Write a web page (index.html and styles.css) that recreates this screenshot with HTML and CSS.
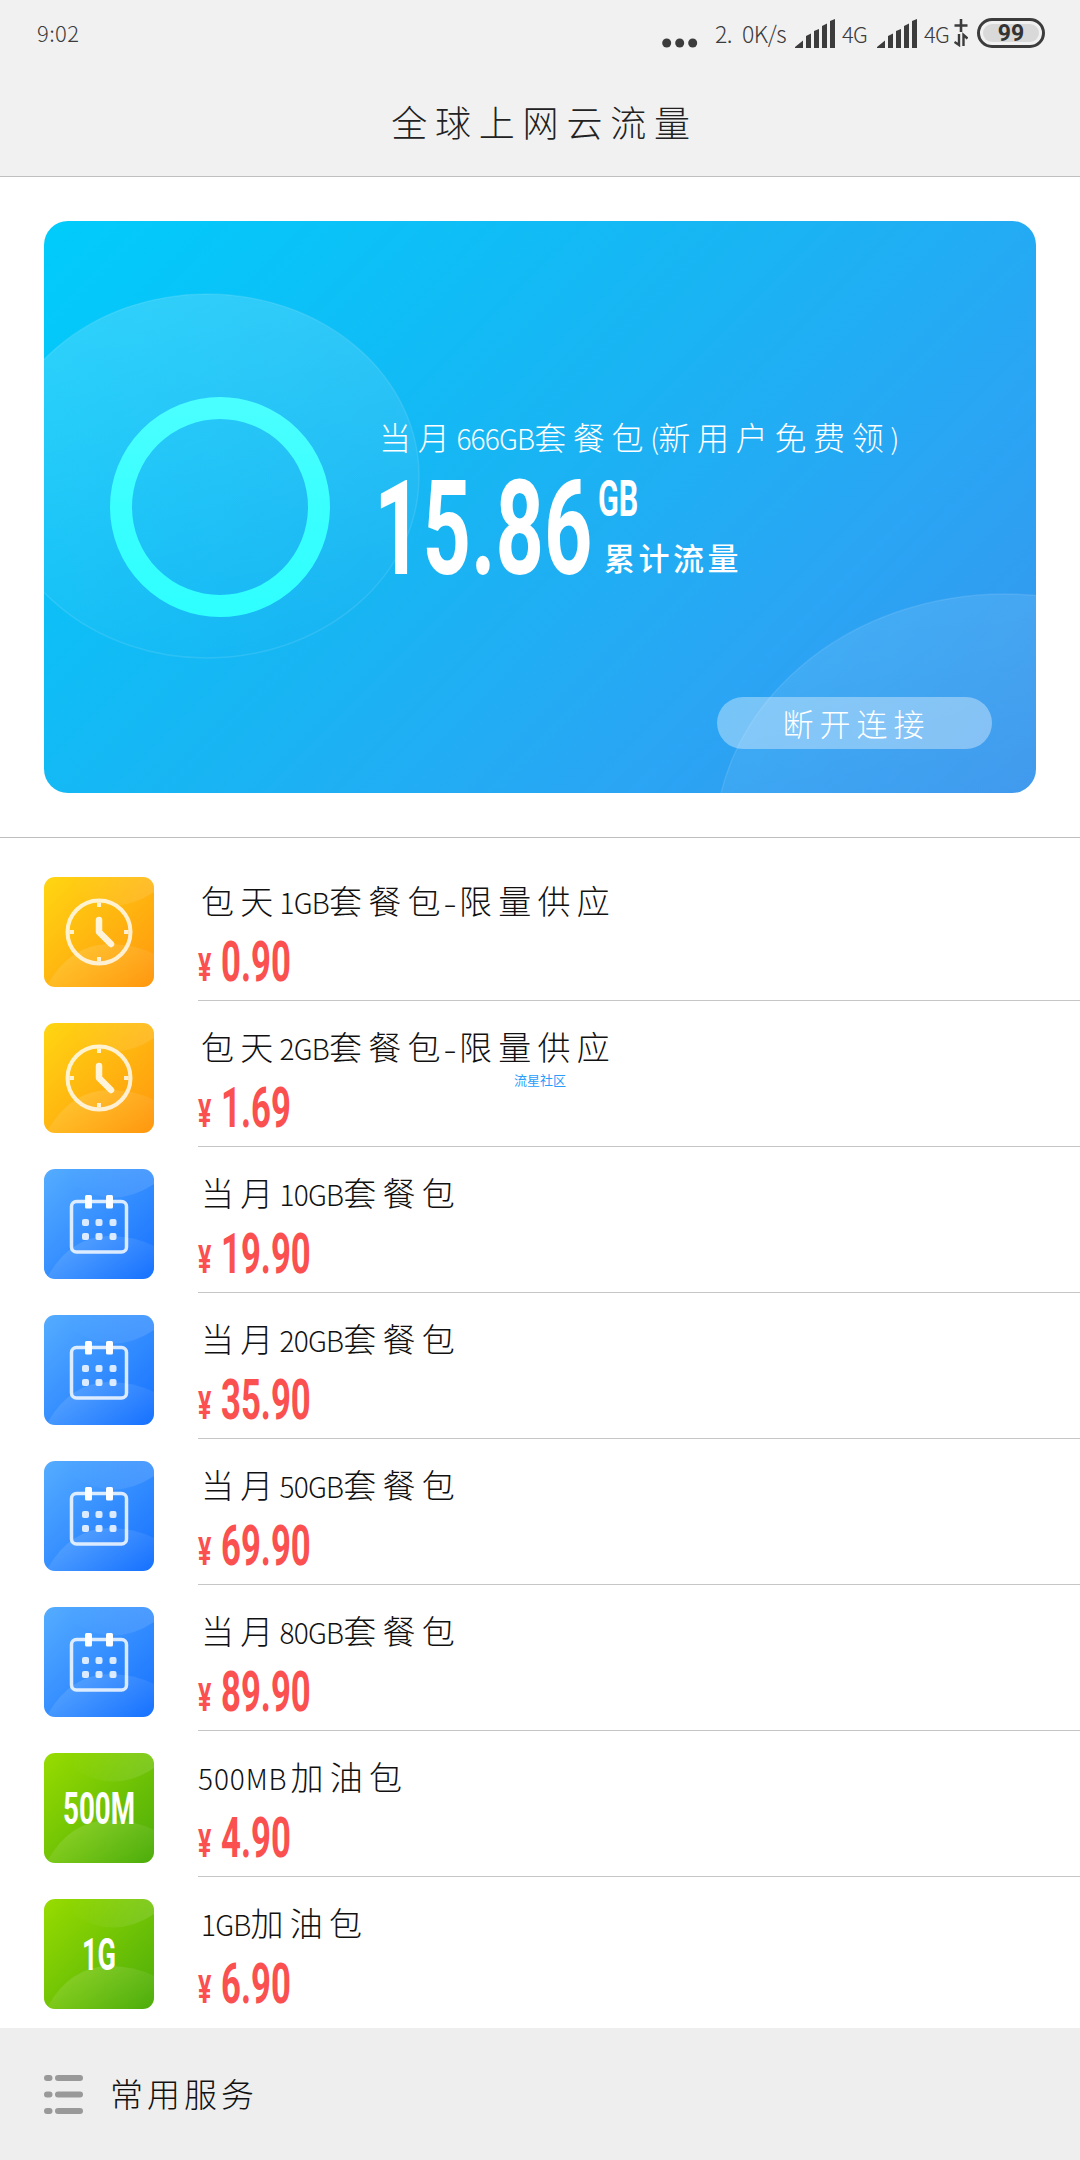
FILE: index.html
```html
<!DOCTYPE html>
<html lang="zh-CN">
<head>
<meta charset="utf-8">
<title>全球上网云流量</title>
<link rel="stylesheet" href="styles.css">
</head>
<body>
<svg class="defs" width="0" height="0" aria-hidden="true">
  <defs>
    <linearGradient id="g-yellow" x1="0" y1="0" x2="1" y2="1"><stop offset="0" stop-color="#ffd612"/><stop offset="1" stop-color="#ff960e"/></linearGradient>
    <linearGradient id="g-blue" x1="0" y1="0" x2="1" y2="1"><stop offset="0" stop-color="#55adff"/><stop offset="1" stop-color="#1570ff"/></linearGradient>
    <linearGradient id="g-green" x1="0" y1="0" x2="1" y2="1"><stop offset="0" stop-color="#98dc00"/><stop offset="1" stop-color="#4bac0a"/></linearGradient>
    <linearGradient id="g-low" x1="0" y1="0" x2="1" y2="1"><stop offset="0" stop-color="#fff" stop-opacity=".16"/><stop offset="1" stop-color="#fff" stop-opacity="0"/></linearGradient>
    <linearGradient id="g-high" x1="0" y1="0" x2="1" y2="0"><stop offset="0" stop-color="#fff" stop-opacity="0"/><stop offset="1" stop-color="#fff" stop-opacity=".12"/></linearGradient>
    <linearGradient id="g-disc" x1="0.3" y1="0" x2="0.6" y2="1"><stop offset="0" stop-color="#fff" stop-opacity=".17"/><stop offset="1" stop-color="#fff" stop-opacity="0"/></linearGradient>
    <linearGradient id="g-disc-low" x1="0.3" y1="0" x2="0.5" y2=".8"><stop offset="0" stop-color="#fff" stop-opacity=".11"/><stop offset="1" stop-color="#fff" stop-opacity="0"/></linearGradient>
    <symbol id="waves" viewBox="0 0 110 110">
      <path fill="url(#g-high)" d="M26 13Q68 43 110 15V11Q110 0 99 0H26Z"/>
      <path fill="url(#g-low)" d="M4 107Q26 68 65 67Q90 67 110 77V99Q110 110 99 110H11Q7 110 4 107Z"/>
    </symbol>
    <symbol id="clock" viewBox="0 0 110 110">
      <rect width="110" height="110" rx="11" fill="url(#g-yellow)"/>
      <use href="#waves"/>
      <g fill="none" stroke="#fff" stroke-opacity=".8">
        <circle cx="55" cy="55" r="31.500" stroke-width="4"/>
        <path stroke-width="4" d="M55 25.500v4.500M55 80v4.500M25.500 55h4.500M80 55h4.500"/>
        <path stroke="#fff" stroke-opacity=".85" stroke-width="6.500" stroke-linecap="round" stroke-linejoin="round" d="M55 43V55L67 67"/>
      </g>
    </symbol>
    <symbol id="calendar" viewBox="0 0 110 110">
      <rect width="110" height="110" rx="11" fill="url(#g-blue)"/>
      <use href="#waves"/>
      <rect x="27.500" y="32.500" width="55" height="50.500" rx="5" fill="none" stroke="#fff" stroke-opacity=".82" stroke-width="3.500"/>
      <g fill="#fff"><rect x="41" y="26" width="7" height="13.500" rx="1.500"/><rect x="62" y="26" width="7" height="13.500" rx="1.500"/></g>
      <g fill="#fff" fill-opacity=".82"><rect x="38" y="50" width="7" height="7" rx="2"/><rect x="51.500" y="50" width="7" height="7" rx="2"/><rect x="65.500" y="50" width="7" height="7" rx="2"/><rect x="38" y="64" width="7" height="7" rx="2"/><rect x="51.500" y="64" width="7" height="7" rx="2"/><rect x="65.500" y="64" width="7" height="7" rx="2"/></g>
    </symbol>
    <symbol id="fuel" viewBox="0 0 110 110">
      <rect width="110" height="110" rx="11" fill="url(#g-green)"/>
      <use href="#waves"/>
    </symbol>
    <symbol id="signal" viewBox="0 0 40 29">
      <path fill="#3c3c3c" d="M0 29V28L8 21.500V29ZM11 29V17L16 14.500V29ZM19 29V12L24 10V29ZM27 29V7L32 4.500V29ZM35 29V2L40 0V29Z"/>
    </symbol>
  </defs>
</svg>

<header class="top">
  <div class="status">
    <span class="time">9:02</span>
    <div class="tray">
      <svg class="dots" width="36" height="10"><g fill="#3c3c3c"><circle cx="4.700" cy="5" r="4.500"/><circle cx="17.700" cy="5" r="4.500"/><circle cx="30.700" cy="5" r="4.500"/></g></svg>
      <span class="speed">2.<span class="gap"></span>0K/s</span>
      <svg class="bars" width="40" height="29"><use href="#signal"/></svg>
      <span class="net">4G</span>
      <svg class="bars" width="40" height="29"><use href="#signal"/></svg>
      <span class="net">4G</span>
      <svg class="plus" width="14" height="28" fill="none" stroke="#3c3c3c"><path stroke-width="2.600" d="M7 0V13M0.500 6.500H13.500"/><path stroke-width="2.400" d="M5 15V26L0.500 23M9.500 27V16L13.500 19.500"/></svg>
      <span class="battery"><span class="level">99</span></span>
    </div>
  </div>
  <h1 class="title">全球上网云流量</h1>
</header>

<section class="hero">
  <div class="card">
    <svg class="discs" viewBox="0 0 992 572">
      <g stroke="#fff" stroke-opacity=".1" stroke-width="1.500">
        <ellipse fill="url(#g-disc)" cx="163" cy="255" rx="212" ry="182"/>
        <ellipse fill="url(#g-disc-low)" cx="961" cy="623" rx="290" ry="250"/>
      </g>
    </svg>
    <div class="usage">
      <svg class="ring" width="220" height="220"><defs><linearGradient id="g-ring" x2="0" y2="1"><stop offset="0" stop-color="#4affff"/><stop offset=".5" stop-color="#3affff"/><stop offset="1" stop-color="#30ffff"/></linearGradient></defs><circle cx="110" cy="110" r="99" fill="none" stroke="url(#g-ring)" stroke-width="22"/></svg>
      <div class="detail">
        <p class="plan">当月<span class="lat">666GB</span>套餐包<span class="lat">(</span>新用户免费领<span class="lat">)</span></p>
        <div class="amount">
          <span class="total"><span class="din">15.86</span></span>
          <div class="side"><span class="unit din">GB</span><span class="label">累计流量</span></div>
        </div>
      </div>
    </div>
    <button class="disconnect">断开连接</button>
  </div>
</section>

<main class="list">
  <article class="row"><svg class="icon"><use href="#clock"/></svg><div class="info"><h2 class="name">包天<span class="lat">1GB</span>套餐包<span class="lat dash">-</span>限量供应</h2><p class="price"><span class="yen din">¥</span><span class="num din">0.90</span></p></div></article>
  <article class="row"><svg class="icon"><use href="#clock"/></svg><div class="info"><h2 class="name">包天<span class="lat">2GB</span>套餐包<span class="lat dash">-</span>限量供应</h2><p class="price"><span class="yen din">¥</span><span class="num din">1.69</span></p></div></article>
  <article class="row"><svg class="icon"><use href="#calendar"/></svg><div class="info"><h2 class="name">当月<span class="lat">10GB</span>套餐包</h2><p class="price"><span class="yen din">¥</span><span class="num din">19.90</span></p></div></article>
  <article class="row"><svg class="icon"><use href="#calendar"/></svg><div class="info"><h2 class="name">当月<span class="lat">20GB</span>套餐包</h2><p class="price"><span class="yen din">¥</span><span class="num din">35.90</span></p></div></article>
  <article class="row"><svg class="icon"><use href="#calendar"/></svg><div class="info"><h2 class="name">当月<span class="lat">50GB</span>套餐包</h2><p class="price"><span class="yen din">¥</span><span class="num din">69.90</span></p></div></article>
  <article class="row"><svg class="icon"><use href="#calendar"/></svg><div class="info"><h2 class="name">当月<span class="lat">80GB</span>套餐包</h2><p class="price"><span class="yen din">¥</span><span class="num din">89.90</span></p></div></article>
  <article class="row"><svg class="icon"><use href="#fuel"/><text class="badge" x="55" y="71" textLength="72" lengthAdjust="spacingAndGlyphs">500M</text></svg><div class="info"><h2 class="name"><span class="lat wide">500MB</span>加油包</h2><p class="price"><span class="yen din">¥</span><span class="num din">4.90</span></p></div></article>
  <article class="row"><svg class="icon"><use href="#fuel"/><text class="badge" x="55" y="71" textLength="34" lengthAdjust="spacingAndGlyphs">1G</text></svg><div class="info"><h2 class="name"><span class="lat">1GB</span>加油包</h2><p class="price"><span class="yen din">¥</span><span class="num din">6.90</span></p></div></article>
</main>

<footer class="services">
  <svg class="menu" width="39" height="40" stroke="#999" stroke-width="6" stroke-linecap="round"><path d="M3 4H5.500M14 4H36M3 20.500H5.500M14 20.500H36M3 37H5.500M14 37H36"/></svg>
  <span class="services-label">常用服务</span>
</footer>
<div class="watermark">流星社区</div>
</body>
</html>
```
FILE: styles.css
```css
* { box-sizing: border-box; margin: 0; padding: 0; }
body {
  width: 1080px;
  height: 2160px;
  display: flex;
  flex-direction: column;
  overflow: hidden;
  background: #fff;
  color: #111;
  font-family: "Noto Sans CJK SC", sans-serif;
  font-weight: 300;
}
.defs { position: absolute; }
svg { display: block; flex: none; }

.top { height: 177px; background: #f1f1f1; border-bottom: 1px solid #bfbfbf; }
.status {
  height: 66px;
  padding: 0 35px 0 37px;
  display: flex;
  justify-content: space-between;
  align-items: center;
  color: #3c3c3c;
  font-size: 22px;
}
.time { line-height: 64px; height: 66px; letter-spacing: 0.4px; }
.tray { display: flex; align-items: center; }
.dots { margin: 19px 17px 0 0; }
.speed { width: 80px; font-size: 23px; line-height: 64px; letter-spacing: -0.5px; white-space: nowrap; }
.gap { display: inline-block; width: 10px; }
.net { width: 42px; padding-left: 7px; font-size: 22px; line-height: 64px; letter-spacing: -0.7px; }
.plus { margin: 0 9px 0 -5px; }
.battery {
  width: 68px;
  height: 30px;
  padding: 3px;
  border: 3px solid #3c3c3c;
  border-radius: 15px;
  display: flex;
}
.level {
  flex: 1;
  border-radius: 9px;
  background: #d9d9d9;
  color: #333;
  text-align: center;
  font: 700 23px/19px Roboto, sans-serif;
}
.title {
  text-align: center;
  font-size: 36px;
  font-weight: 300;
  line-height: 54px;
  margin-top: 28px;
  letter-spacing: 7.800px;
  padding-left: 9px;
  color: #222;
}

.hero { height: 661px; padding: 44px; border-bottom: 1px solid #bfbfbf; }
.card {
  position: relative;
  height: 572px;
  border-radius: 24px;
  overflow: hidden;
  color: #fff;
  background: linear-gradient(135deg, #00ccfb 0%, #18b5f3 45%, #2ba4f4 75%, #3794ec 100%);
}
.discs { position: absolute; inset: 0; width: 992px; height: 572px; }
.usage { position: relative; display: flex; padding: 176px 0 0 66px; height: 476px; }
.ring { margin-right: 49px; }
.plan {
  font-size: 32px;
  line-height: 46px;
  margin-top: 16px;
  letter-spacing: 6.700px;
  white-space: nowrap;
}
.lat { font-size: 28px; letter-spacing: -0.8px; }
.wide { letter-spacing: 0.900px; margin-left: -3px; margin-right: 3px; }
.dash { display: inline-block; width: 15px; margin: 0 2px 0 -5px; text-align: center; transform: scaleX(1.400); }
.amount { display: flex; height: 96px; margin-top: 21px; }
.din { font-family: Roboto, sans-serif; font-weight: 700; transform-origin: 0 0; white-space: nowrap; }
.total { width: 219px; }
.total .din { display: block; font-size: 132px; line-height: 94px; margin-left: -5px; transform: scaleX(0.640); }
.side { display: flex; flex-direction: column; }
.unit { font-size: 50px; line-height: 35px; width: 60px; height: 37px; transform: scaleX(0.610); }
.label { font-size: 31px; font-weight: 500; line-height: 40px; margin: 18px 0 0 6px; letter-spacing: 3.500px; }
.disconnect {
  position: relative;
  display: block;
  margin: 0 44px 0 auto;
  width: 275px;
  height: 52px;
  border: 0;
  border-radius: 26px;
  background: rgba(255, 255, 255, 0.360);
  color: #fff;
  font: 300 31px/50px "Noto Sans CJK SC", sans-serif;
  letter-spacing: 6px;
  text-indent: 4px;
}

.list { padding-top: 17px; height: 1190px; overflow: hidden; }
.row { display: flex; gap: 44px; height: 146px; padding-left: 44px; }
.icon { width: 110px; height: 110px; margin-top: 22px; overflow: visible; }
.badge { font: 700 45px Roboto, sans-serif; fill: #fff; text-anchor: middle; }
.info { flex: 1; border-bottom: 1px solid #c6c6c6; }
.row:last-child .info { border-bottom: 0; }
.name {
  font-size: 33px;
  font-weight: 300;
  line-height: 46px;
  margin-top: 22px;
  padding-left: 3px;
  letter-spacing: 6.300px;
  white-space: nowrap;
}
.price { display: flex; height: 40px; margin-top: 17px; color: #fa5050; }
.yen { width: 23px; font-size: 39px; line-height: 52px; transform: scaleX(0.640); }
.num { font-size: 56px; line-height: 40px; transform: scaleX(0.620); }

.services { flex: 1; display: flex; align-items: center; background: #eee; padding-left: 44px; }
.services-label { margin: -2px 0 0 27px; font-size: 33px; letter-spacing: 4px; line-height: 46px; }

.watermark {
  position: absolute;
  left: 514px;
  top: 1070px;
  font-size: 13px;
  font-weight: 400;
  line-height: 20px;
  color: #2a9dfb;
}
```
